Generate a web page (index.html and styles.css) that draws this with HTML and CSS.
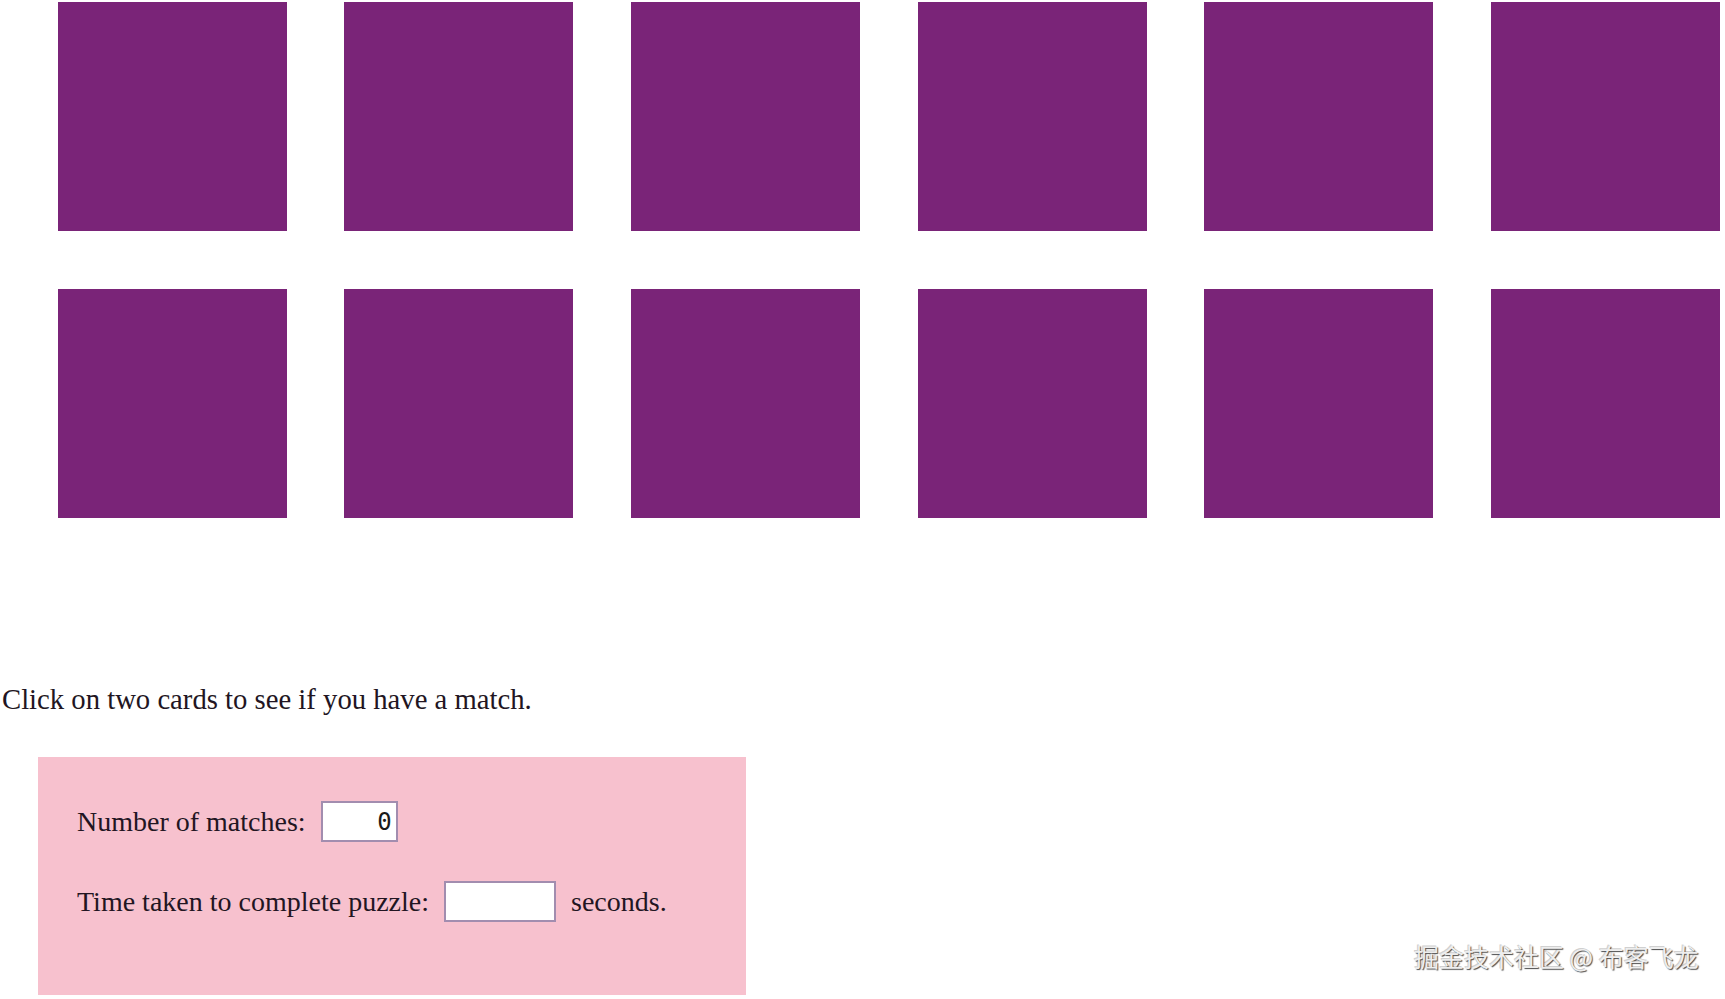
FILE: index.html
```html
<!DOCTYPE html>
<html lang="en">
<head>
<meta charset="utf-8">
<title>Memory Game</title>
<link rel="stylesheet" href="styles.css">
</head>
<body>
  <div class="board">
    <div class="card"></div>
    <div class="card"></div>
    <div class="card"></div>
    <div class="card"></div>
    <div class="card"></div>
    <div class="card"></div>
    <div class="card"></div>
    <div class="card"></div>
    <div class="card"></div>
    <div class="card"></div>
    <div class="card"></div>
    <div class="card"></div>
  </div>

  <p class="hint">Click on two cards to see if you have a match.</p>

  <form class="scores">
    <div class="score-row">
      <label for="matches">Number of matches:</label>
      <input id="matches" class="field field-short" type="text" value="0">
    </div>
    <div class="score-row">
      <label for="timer">Time taken to complete puzzle:</label>
      <input id="timer" class="field field-long" type="text" value="">
      <span>seconds.</span>
    </div>
  </form>

  <div class="watermark">掘金技术社区 @ 布客飞龙</div>
</body>
</html>
```
FILE: styles.css
```css
html, body {
  margin: 0;
  padding: 0;
  background: #ffffff;
}

body {
  position: relative;
  width: 1725px;
  height: 999px;
  overflow: hidden;
  font-family: "Liberation Serif", "Times New Roman", serif;
  color: #221522;
}

/* card grid: two rows of six face-down cards */
.board {
  display: grid;
  grid-template-columns: repeat(6, 229px);
  grid-auto-rows: 229px;
  column-gap: 57.7px;
  row-gap: 58px;
  padding: 2px 0 0 57.7px;
}

.card {
  background: #7a2478;
}

.hint {
  margin: 164px 0 0 0;
  padding-left: 2px;
  font-size: 28.7px;
  line-height: 34px;
}

/* score panel */
.scores {
  box-sizing: border-box;
  width: 708px;
  height: 238px;
  margin: 41px 0 0 38px;
  padding: 44px 0 0 39px;
  background: #f7c1ce;
  display: flex;
  flex-direction: column;
  gap: 39px;
}

.score-row {
  display: flex;
  align-items: center;
  gap: 15px;
  height: 41px;
  font-size: 28px;
  line-height: 34px;
}

.score-row label {
  white-space: nowrap;
}

.field {
  box-sizing: border-box;
  height: 41px;
  margin: 0;
  padding: 0 4px 0 4px;
  border: 2px solid #a28daf;
  background: #ffffff;
  font-family: "DejaVu Sans Mono", monospace;
  font-size: 24px;
  color: #1a1a1a;
  text-align: right;
  outline: none;
}

.field-short {
  width: 77px;
}

.field-long {
  width: 112px;
}

/* embossed site credit in the corner */
.watermark {
  position: absolute;
  left: 1414px;
  top: 943px;
  font-family: "Noto Sans CJK SC", "Noto Sans", sans-serif;
  font-size: 25px;
  line-height: 26px;
  color: #eeeeee;
  text-shadow: 1px 1px 1px #4a4a4a, -1px -1px 0 #d0d0d0;
  white-space: nowrap;
}
```
